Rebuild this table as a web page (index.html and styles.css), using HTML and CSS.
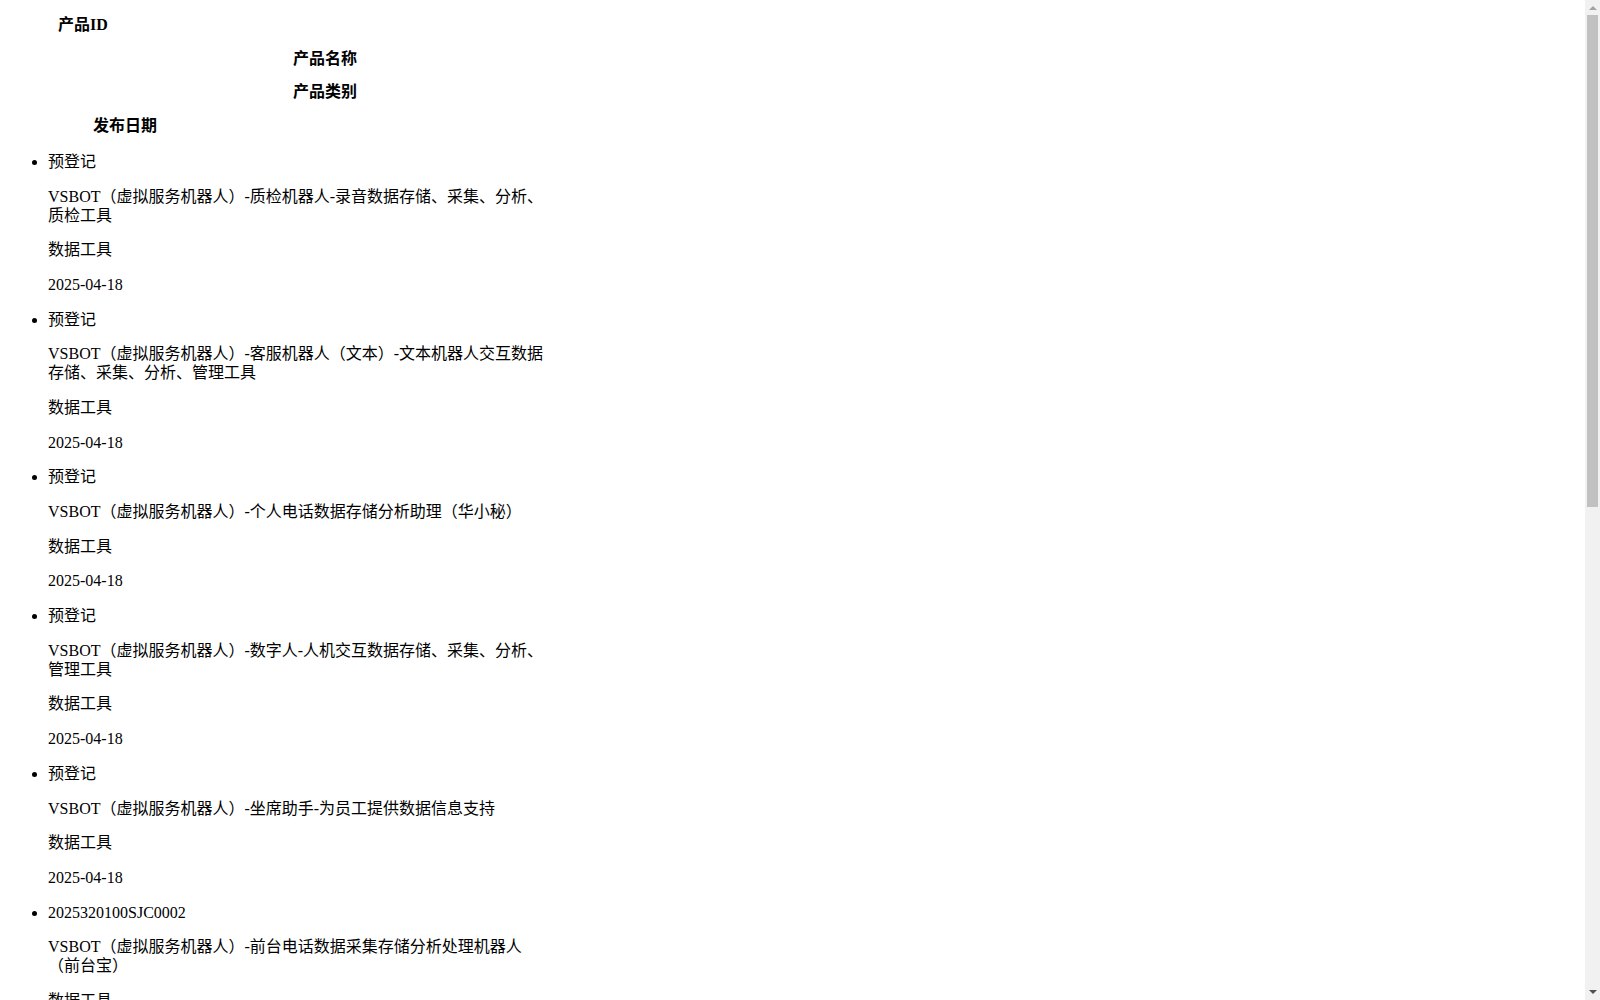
FILE: index.html
```html
<!DOCTYPE html>
<html lang="zh-CN">
<head>
<meta charset="utf-8">
<title>产品列表</title>
<link rel="stylesheet" href="styles.css">
</head>
<body class="page">
<div class="thead">
  <div class="th th-id">产品ID</div>
  <div class="th th-name">产品名称</div>
  <div class="th th-cat">产品类别</div>
  <div class="th th-date">发布日期</div>
</div>
<ul class="list">
  <li class="item">
    <p class="cell">预登记</p>
    <p class="cell">VSBOT（虚拟服务机器人）-质检机器人-录音数据存储、采集、分析、质检工具</p>
    <p class="cell">数据工具</p>
    <p class="cell">2025-04-18</p>
  </li>
  <li class="item">
    <p class="cell">预登记</p>
    <p class="cell">VSBOT（虚拟服务机器人）-客服机器人（文本）-文本机器人交互数据存储、采集、分析、管理工具</p>
    <p class="cell">数据工具</p>
    <p class="cell">2025-04-18</p>
  </li>
  <li class="item">
    <p class="cell">预登记</p>
    <p class="cell">VSBOT（虚拟服务机器人）-个人电话数据存储分析助理（华小秘）</p>
    <p class="cell">数据工具</p>
    <p class="cell">2025-04-18</p>
  </li>
  <li class="item">
    <p class="cell">预登记</p>
    <p class="cell">VSBOT（虚拟服务机器人）-数字人-人机交互数据存储、采集、分析、管理工具</p>
    <p class="cell">数据工具</p>
    <p class="cell">2025-04-18</p>
  </li>
  <li class="item">
    <p class="cell">预登记</p>
    <p class="cell">VSBOT（虚拟服务机器人）-坐席助手-为员工提供数据信息支持</p>
    <p class="cell">数据工具</p>
    <p class="cell">2025-04-18</p>
  </li>
  <li class="item">
    <p class="cell">2025320100SJC0002</p>
    <p class="cell">VSBOT（虚拟服务机器人）-前台电话数据采集存储分析处理机器人（前台宝）</p>
    <p class="cell">数据工具</p>
    <p class="cell">2025-04-18</p>
  </li>
  <li class="item">
    <p class="cell">2025320100SJC0001</p>
    <p class="cell">VSBOT（虚拟服务机器人）-电话机器人-语音交互数据存储、采集、分析、管理工具</p>
    <p class="cell">数据工具</p>
    <p class="cell">2025-04-18</p>
  </li>
  <li class="item">
    <p class="cell">预登记</p>
    <p class="cell">VSBOT（虚拟服务机器人）-知识库-企业知识数据管理工具</p>
    <p class="cell">数据工具</p>
    <p class="cell">2025-04-18</p>
  </li>
  <li class="item">
    <p class="cell">预登记</p>
    <p class="cell">VSBOT（虚拟服务机器人）-外呼机器人-营销数据采集分析工具</p>
    <p class="cell">数据工具</p>
    <p class="cell">2025-04-18</p>
  </li>
  <li class="item">
    <p class="cell">预登记</p>
    <p class="cell">VSBOT（虚拟服务机器人）-工单系统-客户服务数据存储、采集、分析、管理工具</p>
    <p class="cell">数据工具</p>
    <p class="cell">2025-04-18</p>
  </li>
  <li class="item">
    <p class="cell">预登记</p>
    <p class="cell">VSBOT（虚拟服务机器人）-数据看板-运营数据可视化分析工具</p>
    <p class="cell">数据工具</p>
    <p class="cell">2025-04-18</p>
  </li>
  <li class="item">
    <p class="cell">预登记</p>
    <p class="cell">VSBOT（虚拟服务机器人）-智能陪练-培训数据分析工具</p>
    <p class="cell">数据工具</p>
    <p class="cell">2025-04-18</p>
  </li>
</ul>
<div class="scrollbar" aria-hidden="true">
  <div class="sb-arrow sb-up"></div>
  <div class="sb-track">
    <div class="sb-thumb"></div>
  </div>
  <div class="sb-arrow sb-down"></div>
</div>
</body>
</html>
```

FILE: styles.css
```css
html {
  background: #ffffff;
}

.page {
  margin: 0 8px 8px;
  padding: 0;
  color: #000000;
  font-family: "Liberation Serif", "Noto Sans CJK SC", serif;
  font-size: 16px;
  line-height: 19px;
}

.thead {
  display: block;
}

.th {
  margin: 16px 0;
  font-weight: bold;
  text-align: center;
  line-height: 17.7px;
}

.th-id {
  width: 150px;
}

.th-name,
.th-cat {
  width: 634px;
}

.th-date {
  width: 234px;
}

.list {
  width: 500px;
  margin: 17px 0 16px;
  padding-left: 40px;
  list-style: disc;
}

.item {
  display: list-item;
}

.cell {
  margin: 15.7px 0;
}

/* classic scrollbar drawn over the page edge */
.scrollbar {
  position: fixed;
  top: 0;
  right: 0;
  width: 15px;
  height: 100vh;
  background: #f1f1f1;
  display: flex;
  flex-direction: column;
  align-items: center;
}

.sb-arrow {
  flex: 0 0 15px;
  width: 15px;
  display: flex;
  align-items: center;
  justify-content: center;
}

.sb-up::before {
  content: "";
  width: 0;
  height: 0;
  border-left: 4px solid transparent;
  border-right: 4px solid transparent;
  border-bottom: 4px solid #a3a3a3;
  margin-top: 1px;
}

.sb-down::before {
  content: "";
  width: 0;
  height: 0;
  border-left: 4px solid transparent;
  border-right: 4px solid transparent;
  border-top: 4px solid #505050;
  margin-bottom: 1px;
}

.sb-track {
  flex: 1 1 auto;
  width: 100%;
  display: flex;
  justify-content: center;
}

.sb-thumb {
  width: 11px;
  height: 492px;
  background: #c1c1c1;
}
```
